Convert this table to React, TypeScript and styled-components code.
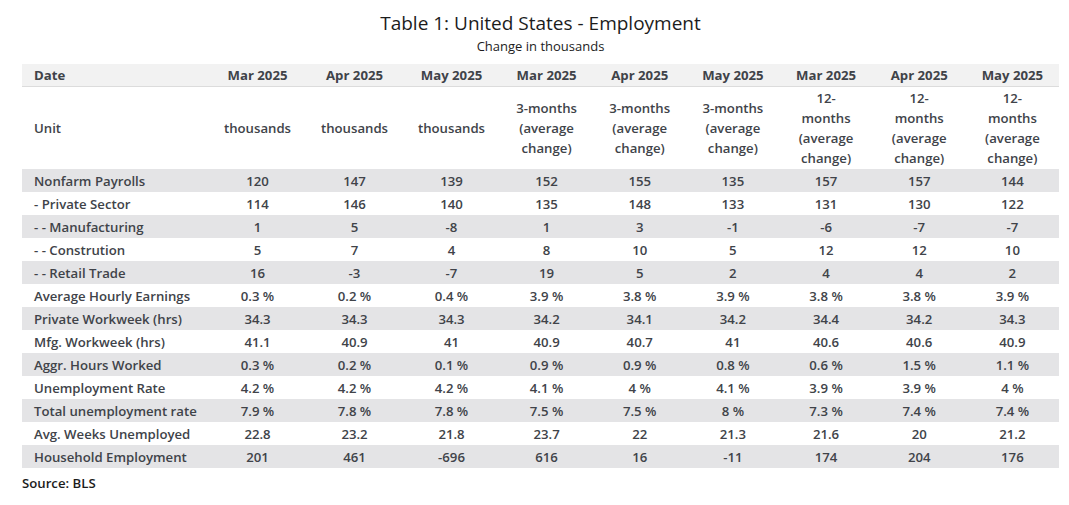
import React from "react";
import styled, { createGlobalStyle } from "styled-components";

const GlobalStyle = createGlobalStyle`
  body {
    margin: 0;
    background: #fff;
    font-family: "Open Sans", "Noto Sans", sans-serif;
  }
`;

const Page = styled.div`
  width: 1069px;
  padding: 11px 10px 0 22px;
  box-sizing: border-box;
`;

const Heading = styled.div`
  width: 1037px;
  display: flex;
  flex-direction: column;
  align-items: center;
  color: #1c1c1c;
  margin-bottom: 8px;
`;

const Title = styled.h1`
  margin: 0;
  font-size: 19px;
  font-weight: 400;
  line-height: 25px;
`;

const Subtitle = styled.div`
  font-size: 13px;
  line-height: 20px;
`;

const Table = styled.table`
  width: 1037px;
  table-layout: fixed;
  border-collapse: collapse;
  font-size: 13.2px;
  font-weight: 600;
  color: #404349;
`;

const HeadRow = styled.tr`
  background: #f2f2f2;
  border-bottom: 1px solid #dcdcdc;
  height: 22px;
`;

const UnitRow = styled.tr`
  height: 83px;
`;

const BodyRow = styled.tr<{ $striped: boolean }>`
  height: 23px;
  background: ${(p) => (p.$striped ? "#e4e4e6" : "#fff")};
`;

const Cell = styled.td<{ $label?: boolean }>`
  padding: 0 ${(p) => (p.$label ? "12px" : "4px")};
  text-align: ${(p) => (p.$label ? "left" : "center")};
  vertical-align: middle;
  white-space: nowrap;
  line-height: 20px;
`;

const Source = styled.div`
  margin-top: 6px;
  font-size: 13.2px;
  font-weight: 600;
  color: #1c1c1c;
`;

const dates = [
  "Mar 2025", "Apr 2025", "May 2025",
  "Mar 2025", "Apr 2025", "May 2025",
  "Mar 2025", "Apr 2025", "May 2025",
];

const units: string[][] = [
  ["thousands"], ["thousands"], ["thousands"],
  ["3-months", "(average", "change)"],
  ["3-months", "(average", "change)"],
  ["3-months", "(average", "change)"],
  ["12-", "months", "(average", "change)"],
  ["12-", "months", "(average", "change)"],
  ["12-", "months", "(average", "change)"],
];

const rows: [string, string[]][] = [
  ["Nonfarm Payrolls", ["120", "147", "139", "152", "155", "135", "157", "157", "144"]],
  ["- Private Sector", ["114", "146", "140", "135", "148", "133", "131", "130", "122"]],
  ["- - Manufacturing", ["1", "5", "-8", "1", "3", "-1", "-6", "-7", "-7"]],
  ["- - Constrution", ["5", "7", "4", "8", "10", "5", "12", "12", "10"]],
  ["- - Retail Trade", ["16", "-3", "-7", "19", "5", "2", "4", "4", "2"]],
  ["Average Hourly Earnings", ["0.3 %", "0.2 %", "0.4 %", "3.9 %", "3.8 %", "3.9 %", "3.8 %", "3.8 %", "3.9 %"]],
  ["Private Workweek (hrs)", ["34.3", "34.3", "34.3", "34.2", "34.1", "34.2", "34.4", "34.2", "34.3"]],
  ["Mfg. Workweek (hrs)", ["41.1", "40.9", "41", "40.9", "40.7", "41", "40.6", "40.6", "40.9"]],
  ["Aggr. Hours Worked", ["0.3 %", "0.2 %", "0.1 %", "0.9 %", "0.9 %", "0.8 %", "0.6 %", "1.5 %", "1.1 %"]],
  ["Unemployment Rate", ["4.2 %", "4.2 %", "4.2 %", "4.1 %", "4 %", "4.1 %", "3.9 %", "3.9 %", "4 %"]],
  ["Total unemployment rate", ["7.9 %", "7.8 %", "7.8 %", "7.5 %", "7.5 %", "8 %", "7.3 %", "7.4 %", "7.4 %"]],
  ["Avg. Weeks Unemployed", ["22.8", "23.2", "21.8", "23.7", "22", "21.3", "21.6", "20", "21.2"]],
  ["Household Employment", ["201", "461", "-696", "616", "16", "-11", "174", "204", "176"]],
];

const App = () => {
  return (
    <Page>
      <GlobalStyle />
      <Heading>
        <Title>Table 1: United States - Employment</Title>
        <Subtitle>Change in thousands</Subtitle>
      </Heading>
      <Table>
        <colgroup>
          <col style={{ width: 187 }} />
          <col style={{ width: 97 }} />
          <col style={{ width: 97 }} />
          <col style={{ width: 97 }} />
          <col />
          <col />
          <col />
          <col />
          <col />
          <col />
        </colgroup>
        <thead>
          <HeadRow>
            <Cell as="th" $label>Date</Cell>
            {dates.map((d, i) => (
              <Cell as="th" key={i}>{d}</Cell>
            ))}
          </HeadRow>
        </thead>
        <tbody>
          <UnitRow>
            <Cell $label>Unit</Cell>
            {units.map((lines, i) => (
              <Cell key={i}>
                {lines.map((l, j) => (
                  <div key={j}>{l}</div>
                ))}
              </Cell>
            ))}
          </UnitRow>
          {rows.map(([label, values], i) => (
            <BodyRow key={label} $striped={i % 2 === 0}>
              <Cell $label>{label}</Cell>
              {values.map((v, j) => (
                <Cell key={j}>{v}</Cell>
              ))}
            </BodyRow>
          ))}
        </tbody>
      </Table>
      <Source>Source: BLS</Source>
    </Page>
  );
};

export default App;
